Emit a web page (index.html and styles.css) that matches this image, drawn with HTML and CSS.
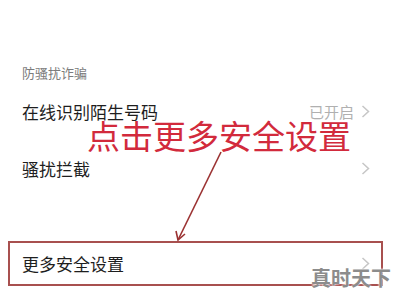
FILE: index.html
```html
<!DOCTYPE html>
<html lang="zh-CN">
<head>
<meta charset="utf-8">
<link rel="stylesheet" href="styles.css">
</head>
<body>
<div class="screen">
  <div class="heading">防骚扰诈骗</div>
  <div class="row">
    <span class="label">在线识别陌生号码</span>
    <span class="value">已开启</span>
    <svg class="chev" width="9" height="13" viewBox="0 0 9 13"><polyline points="1.5,1 7.5,6.5 1.5,12" fill="none" stroke="#c6c6c6" stroke-width="1.5"/></svg>
  </div>
  <div class="row">
    <span class="label">骚扰拦截</span>
    <svg class="chev" width="9" height="13" viewBox="0 0 9 13"><polyline points="1.5,1 7.5,6.5 1.5,12" fill="none" stroke="#c6c6c6" stroke-width="1.5"/></svg>
  </div>
  <div class="row row-boxed">
    <span class="label">更多安全设置</span>
    <svg class="chev" width="9" height="13" viewBox="0 0 9 13"><polyline points="1.5,1 7.5,6.5 1.5,12" fill="none" stroke="#c6c6c6" stroke-width="1.5"/></svg>
  </div>

  <div class="callout">点击更多安全设置</div>
  <svg class="arrow" width="400" height="297" viewBox="0 0 400 297">
    <line x1="221" y1="152" x2="178" y2="240" stroke="#9b3232" stroke-width="1.6"/>
    <polyline points="176,231 178,240 185,234" fill="none" stroke="#9b3232" stroke-width="1.6"/>
  </svg>
  <div class="watermark">真时天下</div>
</div>
</body>
</html>
```
FILE: styles.css
```css
html, body {
  margin: 0;
  padding: 0;
  background: #ffffff;
}
.screen {
  position: relative;
  width: 400px;
  height: 297px;
  overflow: hidden;
  display: flex;
  flex-direction: column;
  font-family: "Noto Sans CJK SC", "Noto Sans", sans-serif;
}
.heading {
  margin-top: 63px;
  height: 20px;
  line-height: 20px;
  padding-left: 22px;
  font-size: 13px;
  color: #7c7c7c;
}
.row {
  height: 57px;
  display: flex;
  align-items: center;
  padding: 0 30px 0 22px;
  box-sizing: border-box;
}
.label {
  flex: 1;
  font-size: 17px;
  color: #1e1e1e;
  line-height: 20px;
}
.value {
  font-size: 15px;
  color: #b0b0b0;
  margin-right: 7px;
  line-height: 20px;
}
.chev {
  display: block;
}
.row-boxed {
  margin: 44px 17px 0 8px;
  height: 45px;
  border: 2px solid #a8504f;
  padding: 0 11px 0 12px;
}
.callout {
  position: absolute;
  left: 87px;
  top: 119px;
  font-size: 33px;
  line-height: 33px;
  color: #d22a3c;
  white-space: nowrap;
}
.arrow {
  position: absolute;
  left: 0;
  top: 0;
}
.watermark {
  position: absolute;
  left: 311px;
  top: 266px;
  font-size: 20px;
  line-height: 24px;
  font-weight: bold;
  color: #8c8c8c;
  text-shadow: 0 0 2px #fff, 0 0 2px #fff;
}
```
